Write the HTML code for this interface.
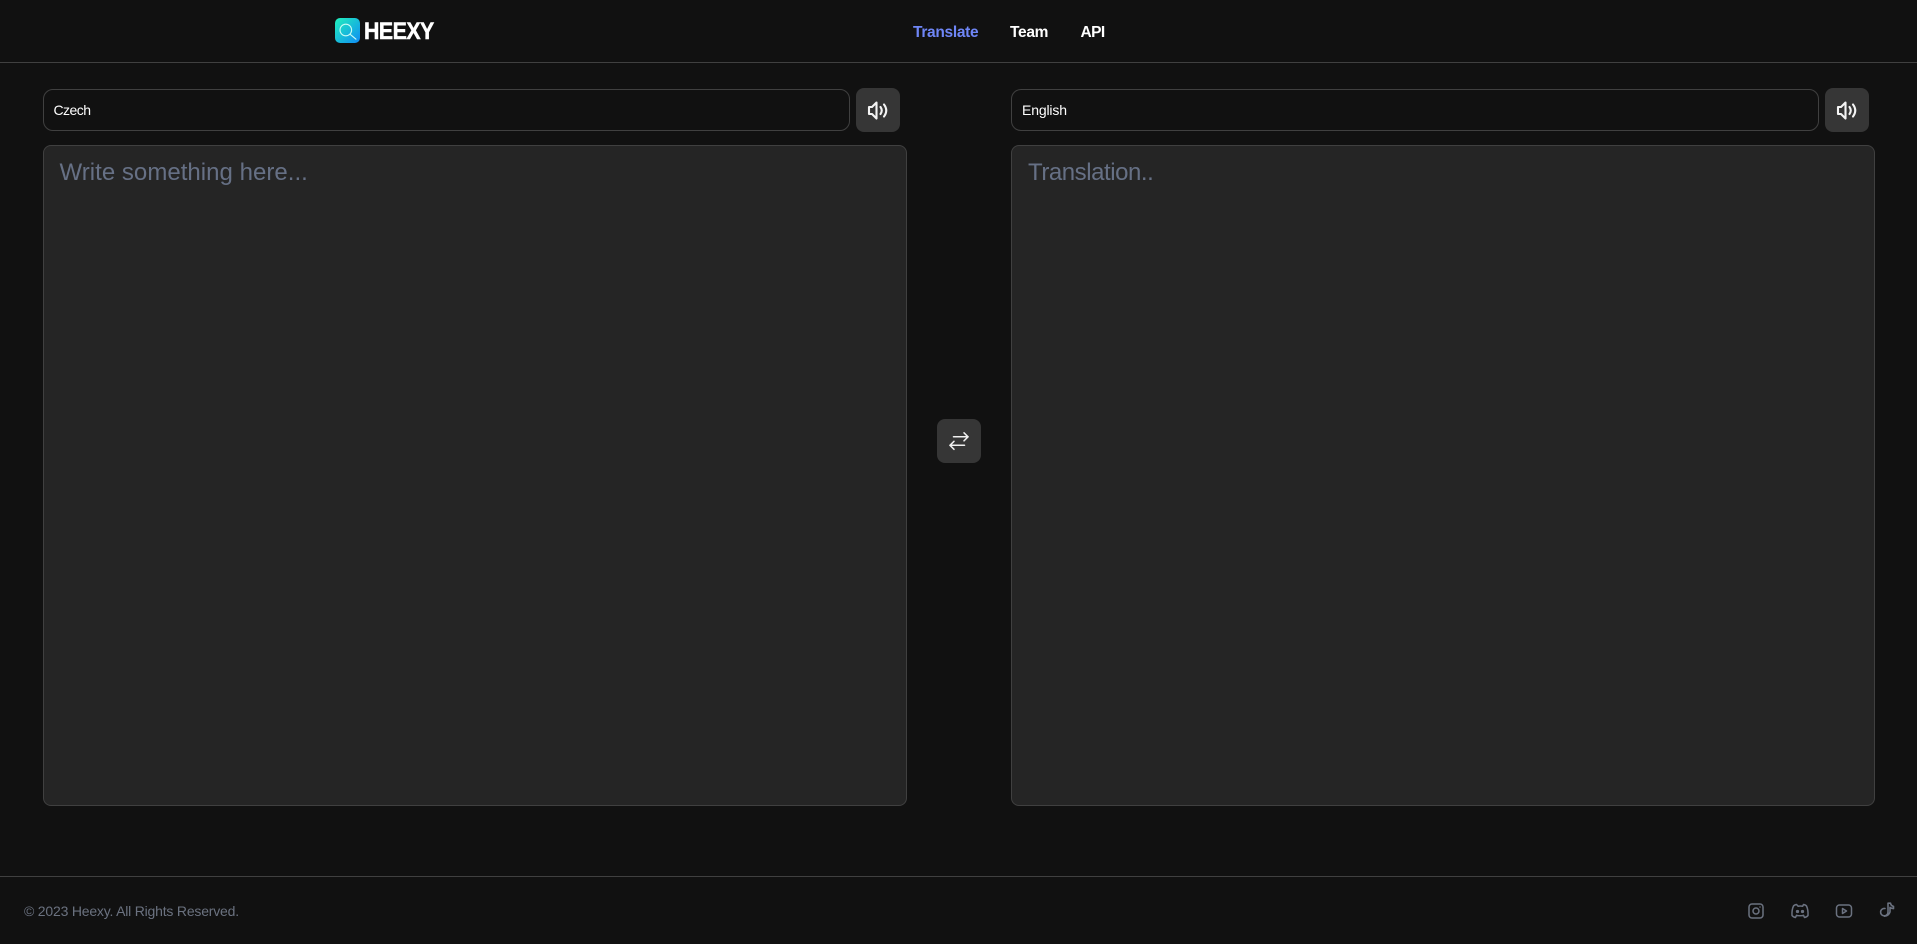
<!DOCTYPE html>
<html lang="en">
<head>
<meta charset="utf-8">
<title>Heexy</title>
<style>
*{box-sizing:border-box;margin:0;padding:0}
html,body{width:1917px;height:944px;overflow:hidden;background:#111111;font-family:"Liberation Sans",sans-serif;color:#fff}
.abs{position:absolute}
.line{position:absolute;left:0;width:1917px;height:1px;background:#404040}
.logo{left:335px;top:18px;width:25px;height:25px;border-radius:5px;background:linear-gradient(135deg,#20ecbe 5%,#1090f2 95%)}
.brand{left:364px;top:17px;font-size:24px;line-height:30px;font-weight:700;letter-spacing:-.6px;-webkit-text-stroke:.5px #fff;transform:scaleX(.89);transform-origin:left center}
.nav{top:23px;font-size:15.5px;line-height:20px;font-weight:700;letter-spacing:-.3px}
.sel{top:89px;height:42px;border:1px solid #404040;border-radius:10px;background:#111;font-size:14px;line-height:40px;padding-left:10px;letter-spacing:-.15px}
.btn{width:44px;height:44px;border-radius:8px;background:#363636;display:flex;align-items:center;justify-content:center}
.ta{top:145px;height:661px;width:864px;border:1px solid #404040;border-radius:8px;background:#252525;color:#667085;font-size:24px;line-height:32px;padding:11px 16px;letter-spacing:-.25px}
.foot{left:24px;top:901px;font-size:14px;line-height:20px;color:#6b7280;letter-spacing:-.2px}
svg{display:block}
</style>
</head>
<body>
<div class="line" style="top:62px"></div>
<div class="abs logo">
<svg width="25" height="25" viewBox="0 0 25 25" fill="none" stroke="#c8fbf5" stroke-width="1.1" stroke-linecap="round"><circle cx="10.800" cy="12" r="5.800"/><path d="M15 16.200l6 5"/></svg>
</div>
<div class="abs brand">HEEXY</div>
<div class="abs nav" style="left:913px;color:#6f86f7">Translate</div>
<div class="abs nav" style="left:1010px">Team</div>
<div class="abs nav" style="left:1080.500px;letter-spacing:-.6px">API</div>

<div class="abs sel" style="left:43px;width:807px;padding-left:9.500px;letter-spacing:-.55px">Czech</div>
<div class="abs btn" style="left:856px;top:88px">
<svg width="24" height="24" viewBox="0 0 24 24" fill="none" stroke="#f4f4f4" stroke-width="2.100" stroke-linecap="round" stroke-linejoin="round"><path d="M10.500 4.500L6 9H3v7h3l4.500 4.500z"/><path d="M14.500 9q2.500 3.500 0 7"/><path d="M18 6.500q4.500 6 0 12"/></svg>
</div>
<div class="abs ta" style="left:43px;padding-left:15.500px;letter-spacing:.03px">Write something here...</div>

<div class="abs btn" style="left:937px;top:419px">
<svg width="24" height="24" viewBox="0 0 24 24" fill="none" stroke="#f0f0f0" stroke-width="1.500" stroke-linecap="round" stroke-linejoin="round"><path d="M6.500 7.800H21"/><path d="M17 3.800l4 4-4 4"/><path d="M17.500 16.300H3"/><path d="M7 12.300l-4 4 4 4"/></svg>
</div>

<div class="abs sel" style="left:1011px;width:808px">English</div>
<div class="abs btn" style="left:1825px;top:88px">
<svg width="24" height="24" viewBox="0 0 24 24" fill="none" stroke="#f4f4f4" stroke-width="2.100" stroke-linecap="round" stroke-linejoin="round"><path d="M10.500 4.500L6 9H3v7h3l4.500 4.500z"/><path d="M14.500 9q2.500 3.500 0 7"/><path d="M18 6.500q4.500 6 0 12"/></svg>
</div>
<div class="abs ta" style="left:1011px;letter-spacing:-.45px">Translation..</div>

<div class="line" style="top:876px"></div>
<div class="abs foot">© 2023 Heexy. All Rights Reserved.</div>

<svg class="abs" style="left:1746px;top:901px" width="20" height="20" viewBox="0 0 20 20" fill="none" stroke="#6b7280" stroke-width="1.500" stroke-linecap="round" stroke-linejoin="round"><rect x="3" y="3" width="14" height="14" rx="3"/><circle cx="10" cy="10" r="3"/><path d="M14 6h.01"/></svg>
<svg class="abs" style="left:1790px;top:901px" width="20" height="20" viewBox="0 0 20 20" fill="none" stroke="#6b7280" stroke-width="1.500" stroke-linecap="round" stroke-linejoin="round"><path d="M6.500 3.500c-1.300.2-2.400.7-3 1.500C2.300 7.500 1.800 11 2 14.500c.8 1 2 1.800 3.500 2l1-2.200c2.300.6 4.700.6 7 0l1 2.200c1.500-.2 2.700-1 3.500-2 .2-3.500-.3-7-1.500-9.500-.6-.8-1.700-1.300-3-1.500l-.8 1.700c-1.500-.2-3.100-.2-4.600 0z"/><circle cx="7.500" cy="10.500" r=".9" fill="#6b7280"/><circle cx="12.500" cy="10.500" r=".9" fill="#6b7280"/></svg>
<svg class="abs" style="left:1834px;top:901px" width="20" height="20" viewBox="0 0 20 20" fill="none" stroke="#6b7280" stroke-width="1.500" stroke-linecap="round" stroke-linejoin="round"><rect x="2.500" y="4" width="15" height="12" rx="3"/><path d="M8.500 7.500l4 2.500-4 2.500z"/></svg>
<svg class="abs" style="left:1877px;top:900px" width="20" height="20" viewBox="0 0 20 20" fill="none" stroke="#6b7280" stroke-width="1.600" stroke-linecap="round" stroke-linejoin="round"><path d="M8 8.500a3.700 3.700 0 1 0 3 3.700V3.200h2.500c.3 1.600 1.300 2.800 3 3.200v2.200c-1.500 0-2.700-.5-3.500-1.200v4.500a5.800 5.800 0 0 1-5.500 4.300"/></svg>
</body>
</html>
